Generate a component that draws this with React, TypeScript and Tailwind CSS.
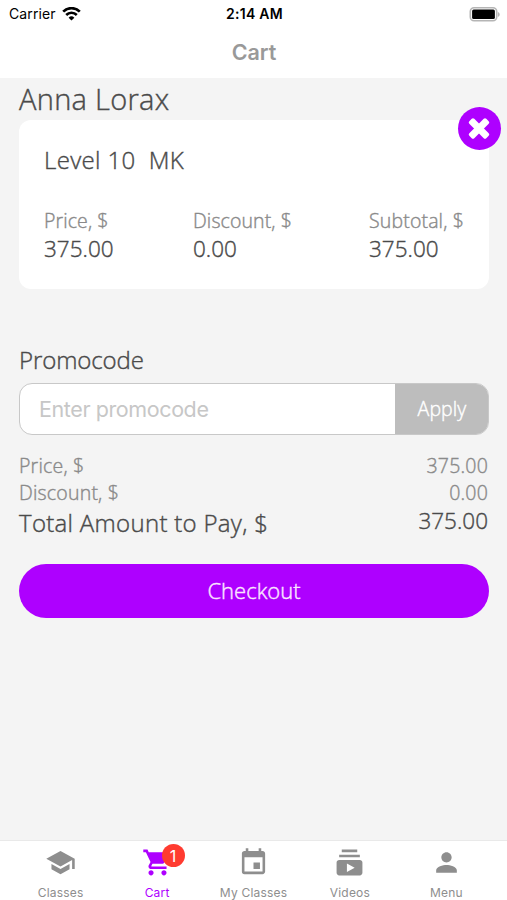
import React from 'react';
import { MdEvent, MdPerson, MdSchool, MdShoppingCart, MdSubscriptions } from 'react-icons/md';

const tabs = [
  { label: 'Classes', icon: MdSchool },
  { label: 'Cart', icon: MdShoppingCart, active: true, badge: 1 },
  { label: 'My Classes', icon: MdEvent },
  { label: 'Videos', icon: MdSubscriptions },
  { label: 'Menu', icon: MdPerson },
];

function StatusBar() {
  return (
    <div className="grid h-7 grid-cols-3 items-center pl-[9px] pr-[7px] text-black">
      <div className="flex items-center gap-[6px]">
        <span className="text-[14px] leading-7 tracking-[0.1px]">Carrier</span>
        <svg className="h-[14px] w-[19px]" viewBox="0 0 19 14" fill="none" stroke="currentColor">
          <path d="M1.2 4.6a11.8 11.8 0 0 1 16.6 0" strokeWidth="2.7" />
          <path d="M4.2 8a7.5 7.5 0 0 1 10.6 0" strokeWidth="2.6" />
          <path d="M9.5 13.6 6.6 10.7a4.1 4.1 0 0 1 5.8 0z" fill="currentColor" stroke="none" />
        </svg>
      </div>
      <span className="text-center text-[14px] font-semibold leading-7 tracking-[0.3px]">2:14 AM</span>
      <svg className="h-[15px] w-[31px] justify-self-end" viewBox="0 0 31 15">
        <rect x="1.3" y="0.8" width="26.4" height="13" rx="3.8" fill="#fff" stroke="#b5b5b5" strokeWidth="1.6" />
        <rect x="3.1" y="2.6" width="22.8" height="9.4" rx="1.5" fill="#000" />
        <path d="M28.9 5v4.8c1.2-.5 1.8-1.4 1.8-2.4s-.6-1.9-1.8-2.4z" fill="#b5b5b5" />
      </svg>
    </div>
  );
}

function CartItem() {
  return (
    <div className="relative h-[169px] rounded-[12px] bg-white px-[25px] pt-6">
      <h2 className="whitespace-pre text-[24px] leading-8 tracking-[0.35px]">Level 10  MK</h2>
      <div className="mt-[31px] flex">
        <div className="w-[149px]">
          <p className="text-[19.5px] leading-[27px] tracking-[0.1px] text-[#8a8a8a]">Price, $</p>
          <p className="text-[22.5px] leading-[30px]">375.00</p>
        </div>
        <div className="w-[176px]">
          <p className="text-[19.5px] leading-[27px] tracking-[0.1px] text-[#8a8a8a]">Discount, $</p>
          <p className="text-[22.5px] leading-[30px]">0.00</p>
        </div>
        <div className="whitespace-nowrap">
          <p className="text-[19.5px] leading-[27px] tracking-[0.15px] text-[#8a8a8a]">Subtotal, $</p>
          <p className="text-[22.5px] leading-[30px]">375.00</p>
        </div>
      </div>
      <button className="absolute -right-3 -top-[13px] flex size-[43px] items-center justify-center rounded-full bg-[#ae00ff] text-white">
        <svg className="size-[25px]" viewBox="-12 -12.5 25 25" fill="currentColor">
          <rect x="-12" y="-3.5" width="24" height="7" rx="1.8" transform="rotate(45)" />
          <rect x="-12" y="-3.5" width="24" height="7" rx="1.8" transform="rotate(-45)" />
        </svg>
      </button>
    </div>
  );
}

function Promocode() {
  return (
    <div className="mt-[55px]">
      <h2 className="text-[24px] leading-8 tracking-[-0.1px]">Promocode</h2>
      <div className="mt-[7px] flex h-[52px] overflow-hidden rounded-[13px] border-[1.5px] border-[#c8c8c8] bg-white">
        <input
          className="min-w-0 flex-1 pl-[19px] font-['Inter',sans-serif] text-[21.5px] font-normal tracking-[-0.4px] outline-none [-webkit-text-stroke:0px] placeholder:text-[#c7c7c7]"
          placeholder="Enter promocode"
        />
        <button className="-my-px -mr-px w-[94px] bg-[#bdbdbd] text-[19.5px] tracking-[0.1px] text-white">Apply</button>
      </div>
    </div>
  );
}

function Totals() {
  return (
    <div className="mt-[17px] pr-px">
      <div className="flex justify-between text-[19.5px] leading-[27px] tracking-[0.2px] text-[#8a8a8a]">
        <span>Price, $</span>
        <span>375.00</span>
      </div>
      <div className="flex justify-between text-[19.5px] leading-[27px] tracking-[0.2px] text-[#8a8a8a]">
        <span>Discount, $</span>
        <span>0.00</span>
      </div>
      <div className="flex justify-between leading-[33px]">
        <span className="text-[24px] tracking-[0.3px]">Total Amount to Pay, $</span>
        <span className="text-[22.5px] leading-[30px]">375.00</span>
      </div>
    </div>
  );
}

function TabBar() {
  return (
    <nav className="flex h-[60px] border-t border-[#e9e9e9] bg-white px-[12.5px] font-['Inter',sans-serif] font-normal">
      {tabs.map(({ label, icon: Icon, active, badge }) => (
        <div
          key={label}
          className={`flex flex-1 flex-col items-center pt-[6px] ${active ? 'text-[#ae00ff]' : 'text-[#8e8e8e]'}`}
        >
          <div className="relative">
            <Icon className="size-[31px]" />
            {badge && (
              <span className="absolute -right-[12px] -top-[3px] flex size-[23px] items-center justify-center rounded-full bg-[#ff3b30] text-[16px] text-white">
                {badge}
              </span>
            )}
          </div>
          <span className="mt-[7px] whitespace-nowrap text-[12px] leading-4 tracking-[0.2px]">{label}</span>
        </div>
      ))}
    </nav>
  );
}

export default function App() {
  return (
    <div className="flex h-[900px] w-full flex-col overflow-hidden bg-[#f4f4f4] text-[#4a4a4a]">
      <header className="h-[78px] bg-white font-['Inter',sans-serif]">
        <StatusBar />
        <h1 className="mt-2 pl-px text-center text-[21.5px] font-semibold leading-8 text-[#999]">Cart</h1>
      </header>

      {/* light cut with a thin stroke sits between the light and regular weights */}
      <main className="flex-1 px-[19px] pr-[18px] font-['Open_Sans',sans-serif] font-light [-webkit-text-stroke:0.4px]">
        <h2 className="h-[42px] text-[29px] leading-[42px] tracking-[0.3px]">Anna Lorax</h2>
        <CartItem />
        <Promocode />
        <Totals />
        <button className="mt-[25px] h-[53.5px] w-full rounded-full bg-[#ae00ff] text-[22px] text-[#fbe6ff]">
          Checkout
        </button>
      </main>

      <TabBar />
    </div>
  );
}
